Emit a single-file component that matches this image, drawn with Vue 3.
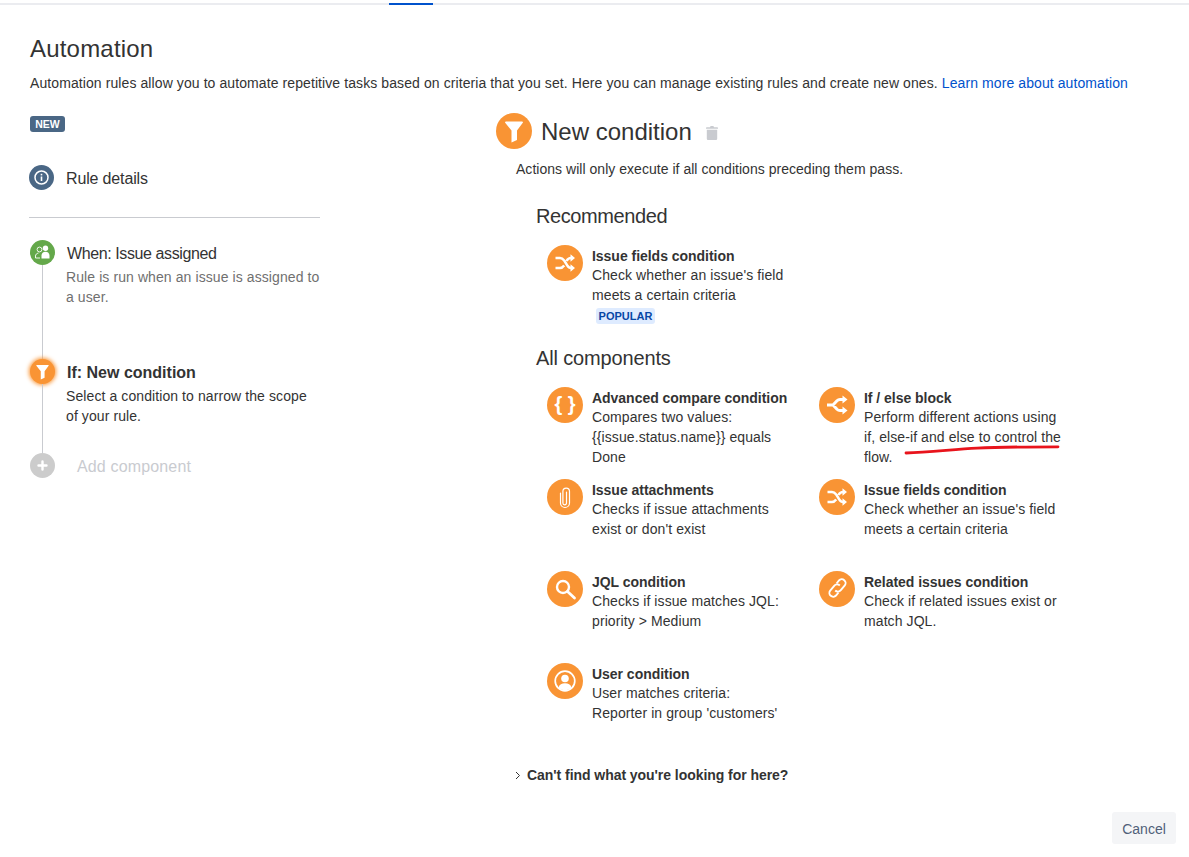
<script setup>
const recommended = [
  { icon: 'shuffle', title: 'Issue fields condition', lines: ["Check whether an issue's field", 'meets a certain criteria'] },
]
const all = [
  { icon: 'braces', title: 'Advanced compare condition', lines: ['Compares two values:', '{{issue.status.name}} equals', 'Done'] },
  { icon: 'branch', title: 'If / else block', lines: ['Perform different actions using', 'if, else-if and else to control the', 'flow.'], mark: true },
  { icon: 'clip', title: 'Issue attachments', lines: ['Checks if issue attachments', "exist or don't exist"] },
  { icon: 'shuffle', title: 'Issue fields condition', lines: ["Check whether an issue's field", 'meets a certain criteria'] },
  { icon: 'search', title: 'JQL condition', lines: ['Checks if issue matches JQL:', 'priority > Medium'] },
  { icon: 'link', title: 'Related issues condition', lines: ['Check if related issues exist or', 'match JQL.'] },
  { icon: 'user', title: 'User condition', lines: ['User matches criteria:', "Reporter in group 'customers'"] },
]
</script>

<template>
  <div class="page">
    <svg class="sprite" width="0" height="0" aria-hidden="true">
      <symbol id="i-funnel" viewBox="0 0 36 36">
        <path d="M9.800 8.500h16.400a.8.800 0 0 1 .6 1.300L21 17.500V27l-5.500 2.500v-12L9.200 9.800a.8.800 0 0 1 .6-1.300z" fill="#fff" />
      </symbol>
      <symbol id="i-shuffle" viewBox="0 0 36 36">
        <path d="M8.500 13h4.500c2 0 3 1 4.200 2.600l1.600 2.400 1.400 2.300c1 1.600 2 2.700 4 2.700H25M8.500 23H13c2 0 3-1 4.200-2.600M19.500 16c1-1.800 2-3 4.500-3h1" fill="none" stroke="#fff" stroke-width="2.500" />
        <path d="M23.500 9.300 28 13l-4.500 3.700zM23.500 19.300 28 23l-4.500 3.700z" fill="#fff" />
      </symbol>
      <symbol id="i-branch" viewBox="0 0 36 36">
        <path d="M8 18h6l4-4.200c.8-.8 1.600-1.300 3-1.300h3.500M14 18l4 4.200c.8.800 1.600 1.300 3 1.300h3.500" fill="none" stroke="#fff" stroke-width="3" />
        <path d="M23.500 8.500 28.500 12.500l-5 4zM23.500 19.500l5 4-5 4z" fill="#fff" />
      </symbol>
      <symbol id="i-clip" viewBox="0 0 36 36">
        <path d="M19.500 13v11a1.800 1.800 0 0 1-3.600 0V12.500a3.300 3.300 0 0 1 6.600 0V24a4.500 4.500 0 0 1-9 0V14" fill="none" stroke="#fff" stroke-width="1.200" stroke-linecap="round" />
      </symbol>
      <symbol id="i-search" viewBox="0 0 36 36">
        <circle cx="16" cy="16" r="6" fill="none" stroke="#fff" stroke-width="2.400" />
        <path d="m20.500 20.500 7 6.500" fill="none" stroke="#fff" stroke-width="2.800" stroke-linecap="round" />
      </symbol>
      <symbol id="i-link" viewBox="0 0 36 36">
        <path d="m17.500 12.500 2.500-3a3.800 3.800 0 0 1 5.800 4.900l-4 4.800a3.800 3.800 0 0 1-5.600.3" fill="none" stroke="#fff" stroke-width="1.900" />
        <path d="m19.500 21.500-2.500 3a3.800 3.800 0 0 1-5.800-4.900l4-4.800a3.800 3.800 0 0 1 5.600-.3" fill="none" stroke="#fff" stroke-width="1.900" />
      </symbol>
      <symbol id="i-user" viewBox="0 0 36 36">
        <circle cx="18" cy="18" r="9.800" fill="none" stroke="#fff" stroke-width="1.700" />
        <circle cx="18" cy="15.500" r="3.800" fill="#fff" />
        <path d="M11.500 24.500c.8-3 3.300-4.200 6.500-4.200s5.700 1.200 6.500 4.200c-1.700 1.800-4 2.800-6.500 2.800s-4.800-1-6.500-2.800z" fill="#fff" />
      </symbol>
      <symbol id="i-trash" viewBox="0 0 12 14">
        <path d="M4 1.200 4.600 0h2.800L8 1.200h3.200a.8.800 0 0 1 .8.800v.8H0V2a.8.800 0 0 1 .8-.8zM.8 3.800h10.400v9a1.200 1.200 0 0 1-1.200 1.200H2a1.200 1.200 0 0 1-1.200-1.200z" fill="#c9cbd0" />
      </symbol>
    </svg>

    <div class="topbar"><span class="tab"></span></div>

    <header class="head">
      <h1>Automation</h1>
      <p>
        Automation rules allow you to automate repetitive tasks based on criteria that you set. Here you can manage existing rules and create new ones.
        <a href="#" class="learn">Learn more about automation</a>
      </p>
    </header>

    <div class="columns">
      <aside class="side">
        <span class="new">NEW</span>

        <div class="details">
          <span class="dot slate">
            <svg viewBox="0 0 25 25" width="25" height="25">
              <circle cx="12.500" cy="12.500" r="6.500" fill="none" stroke="#fff" stroke-width="1.500" />
              <rect x="11.700" y="11.500" width="1.600" height="4.500" fill="#fff" />
              <rect x="11.700" y="8.800" width="1.600" height="1.600" fill="#fff" />
            </svg>
          </span>
          <span class="details-text">Rule details</span>
        </div>

        <div class="steps">
          <div class="step step-when">
            <div class="rail">
              <span class="dot green">
                <svg viewBox="0 0 25 25" width="25" height="25">
                  <circle cx="15.500" cy="8.200" r="2.700" fill="#fff" />
                  <path d="M11.500 18.500v-3c0-2.300 1.700-3.700 4-3.700s4 1.400 4 3.700v3z" fill="#fff" />
                  <circle cx="9.500" cy="9.500" r="2.400" fill="none" stroke="#fff" stroke-width=".9" />
                  <path d="M5.500 18v-2c0-1.500 1-2.500 3-3M5.500 18h4.500" fill="none" stroke="#fff" stroke-width=".9" />
                </svg>
              </span>
              <span class="wire"></span>
            </div>
            <div class="step-body">
              <div class="step-title when">When: Issue assigned</div>
              <div class="step-desc muted">Rule is run when an issue is assigned to a user.</div>
            </div>
          </div>

          <div class="step step-if">
            <div class="rail">
              <span class="dot orange glow">
                <svg viewBox="0 0 36 36" width="25" height="25"><use href="#i-funnel" /></svg>
              </span>
              <span class="wire"></span>
            </div>
            <div class="step-body">
              <div class="step-title strong">If: New condition</div>
              <div class="step-desc">Select a condition to narrow the scope of your rule.</div>
            </div>
          </div>

          <div class="step step-add">
            <div class="rail">
              <span class="dot grey">
                <svg viewBox="0 0 25 25" width="25" height="25">
                  <path d="M12.500 8.500v8M8.500 12.500h8" stroke="#fff" stroke-width="2.400" stroke-linecap="round" />
                </svg>
              </span>
            </div>
            <div class="add-text">Add component</div>
          </div>
        </div>
      </aside>

      <main class="main">
        <div class="cond-head">
          <span class="big-dot"><svg viewBox="0 0 36 36" width="36" height="36"><use href="#i-funnel" /></svg></span>
          <h2>New condition</h2>
          <svg class="trash" width="12" height="14"><use href="#i-trash" /></svg>
        </div>
        <p class="cond-sub">Actions will only execute if all conditions preceding them pass.</p>

        <h3 class="group first">Recommended</h3>
        <div class="item solo" v-for="it in recommended" :key="it.title">
          <span class="big-dot"><svg viewBox="0 0 36 36" width="36" height="36"><use :href="'#i-' + it.icon" /></svg></span>
          <div class="item-body">
            <div class="item-title">{{ it.title }}</div>
            <div v-for="l in it.lines" :key="l" class="item-line">{{ l }}</div>
            <span class="popular">POPULAR</span>
          </div>
        </div>

        <h3 class="group second">All components</h3>
        <div class="grid">
          <div class="item" v-for="it in all" :key="it.title + it.icon">
            <span class="big-dot">
              <span v-if="it.icon === 'braces'" class="braces">{ }</span>
              <svg v-else viewBox="0 0 36 36" width="36" height="36"><use :href="'#i-' + it.icon" /></svg>
            </span>
            <div class="item-body">
              <div class="item-title">{{ it.title }}</div>
              <div v-for="l in it.lines" :key="l" class="item-line">{{ l }}</div>
            </div>
            <svg v-if="it.mark" class="scribble" width="160" height="12" viewBox="0 0 160 12">
              <path d="M2 8C25 7 50 4.500 73 3.200S125 1.800 154 1.800" fill="none" stroke="#e8141c" stroke-width="2.800" stroke-linecap="round" />
            </svg>
          </div>
        </div>

        <div class="more">
          <svg width="6" height="9" viewBox="0 0 6 9"><path d="m1 1 3.500 3.500L1 8" fill="none" stroke="#333" stroke-width="1" /></svg>
          <span>Can't find what you're looking for here?</span>
        </div>

        <div class="footer"><button class="cancel" type="button">Cancel</button></div>
      </main>
    </div>
  </div>
</template>

<style>
html, body { margin: 0; background: #fff; }
</style>

<style scoped>
.page {
  position: relative;
  height: 857px;
  overflow: hidden;
  font-family: "Liberation Sans", Arial, sans-serif;
  font-size: 14px;
  line-height: 20px;
  letter-spacing: .09px;
  color: #333;
  background: #fff;
}
.sprite { position: absolute; }
.topbar {
  height: 2px;
  margin-top: 3px;
  background: #ebecf0;
  display: flex;
}
.tab { width: 44px; height: 2px; margin-left: 389px; background: #0052cc; }
.head { padding: 0 30px; }
h1 {
  margin: 30px 0 0;
  font-size: 24px;
  line-height: 28px;
  font-weight: 400;
  letter-spacing: .2px;
  color: #333;
}
.head p { margin: 10px 0 0; white-space: nowrap; }
.learn { color: #0052cc; text-decoration: none; }
.columns {
  display: flex;
  padding-left: 30px;
}
.side { width: 290px; flex: none; padding-top: 23px; }
.new {
  display: block;
  width: 35px;
  height: 16px;
  box-sizing: border-box;
  border-radius: 3px;
  background: #4a6785;
  color: #fff;
  font-size: 10.5px;
  font-weight: 700;
  line-height: 16px;
  text-align: center;
  letter-spacing: 0;
}
.dot {
  width: 25px;
  height: 25px;
  border-radius: 50%;
  flex: none;
  display: block;
}
.dot svg { display: block; }
.slate { background: #4a6785; }
.green { background: #64a84a; }
.orange { background: #f99434; }
.grey { background: #cccccc; }
.glow { box-shadow: 0 0 4px 1px #f99434; }
.details {
  display: flex;
  align-items: center;
  height: 25px;
  margin-top: 33px;
  padding-bottom: 27px;
  margin-left: -1px;
  border-bottom: 1px solid #c9cbd0;
  box-sizing: content-box;
}
.details-text { margin-left: 12px; padding-top: 2px; font-size: 16px; letter-spacing: -.15px; color: #333; }
.steps { margin-top: 22px; }
.step { display: flex; }
.step-when { height: 119px; }
.step-if { height: 94px; }
.rail {
  width: 25px;
  flex: none;
  display: flex;
  flex-direction: column;
  align-items: center;
}
.wire { width: 1px; flex: 1; background: #c9cbd0; }
.step-body { margin-left: 11px; padding-top: 2px; }
.step-title { font-size: 16px; line-height: 24px; color: #333; padding-left: 1px; letter-spacing: 0; }
.step-title.when { letter-spacing: -.4px; }
.step-title.strong { font-weight: 700; }
.step-desc { margin-top: 1px; width: 255px; }
.muted { color: #707070; }
.add-text { margin-left: 22px; padding-top: 1px; font-size: 16px; line-height: 25px; color: #c9cbd0; letter-spacing: .15px; }

.main { margin-left: 176px; flex: 1; position: relative; }
.cond-head { display: flex; align-items: center; height: 36px; margin-top: 20px; }
.big-dot {
  width: 36px;
  height: 36px;
  border-radius: 50%;
  background: #f99434;
  flex: none;
  display: block;
}
.big-dot svg { display: block; }
.braces {
  display: block;
  text-align: center;
  color: #fff;
  font-size: 20px;
  font-weight: 700;
  line-height: 34px;
  letter-spacing: 0;
}
h2 {
  margin: 0 0 0 9px;
  padding-top: 2px;
  font-size: 24px;
  line-height: 28px;
  font-weight: 400;
  letter-spacing: 0;
  color: #333;
}
.trash { margin: 4px 0 0 14px; }
.cond-sub { margin: 10px 0 0 20px; letter-spacing: .03px; }
.group {
  margin: 0 0 0 40px;
  font-size: 20px;
  line-height: 24px;
  font-weight: 400;
  color: #333;
}
.first { margin-top: 25px; letter-spacing: -.4px; }
.second { margin-top: 22px; letter-spacing: -.15px; }
.item { display: flex; position: relative; margin-left: 51px; }
.solo { margin-top: 17px; }
.item-body { margin-left: 9px; padding-top: 3px; }
.item-title { font-size: 14px; line-height: 17px; font-weight: 700; letter-spacing: -.03px; color: #333; }
.item-line { white-space: nowrap; }
.popular {
  display: block;
  width: 59px;
  height: 16px;
  margin: 3px 0 0 4px;
  border-radius: 3px;
  background: #deebff;
  color: #0747a6;
  font-size: 11px;
  line-height: 16px;
  font-weight: 700;
  text-align: center;
  letter-spacing: 0;
}
.grid {
  display: grid;
  grid-template-columns: 272px 272px;
  grid-auto-rows: 92px;
  margin: 17px 0 0 51px;
}
.grid .item { margin-left: 0; }
.scribble { position: absolute; left: 85px; top: 58px; }
.more {
  display: flex;
  align-items: center;
  margin: 10px 0 0 19px;
  font-size: 14px;
  font-weight: 700;
  letter-spacing: -.05px;
  color: #333;
}
.more span { margin-left: 6px; }
.footer { position: absolute; right: 13px; top: 719px; }
.cancel {
  width: 64px;
  height: 32px;
  border: 0;
  border-radius: 3px;
  background: #f4f5f7;
  color: #505f79;
  font: 14px "Liberation Sans", Arial, sans-serif;
  padding: 2px 0 0;
}
</style>
